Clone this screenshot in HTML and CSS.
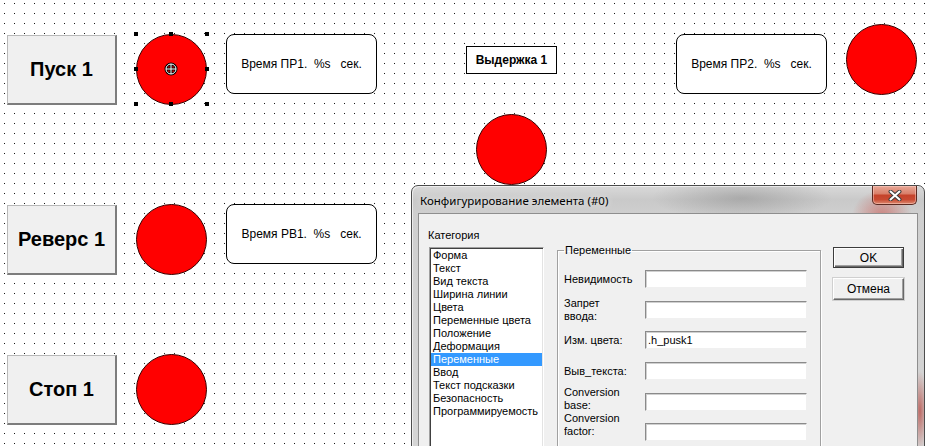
FILE: index.html
```html
<!DOCTYPE html>
<html lang="ru">
<head>
<meta charset="utf-8">
<title>Визуализация</title>
<link rel="stylesheet" href="styles.css">
</head>
<body>
<div class="canvas">
  <div class="obj hmi-btn b1">Пуск 1</div>
  <div class="obj hmi-btn b2">Реверс 1</div>
  <div class="obj hmi-btn b3">Стоп 1</div>

  <div class="obj lamp l1"></div>
  <div class="obj lamp l2"></div>
  <div class="obj lamp l3"></div>
  <div class="obj lamp l4"></div>
  <div class="obj lamp l5"></div>

  <div class="obj handle h-tl"></div><div class="obj handle h-tm"></div><div class="obj handle h-tr"></div>
  <div class="obj handle h-ml"></div><div class="obj handle h-mr"></div>
  <div class="obj handle h-bl"></div><div class="obj handle h-bm"></div><div class="obj handle h-br"></div>
  <svg class="obj cross" width="14" height="14" viewBox="0 0 14 14">
    <circle cx="7" cy="7" r="5" fill="none" stroke="#000" stroke-width="3"/>
    <path d="M7 1.5V12.5M1.5 7H12.5" stroke="#000" stroke-width="3"/>
    <circle cx="7" cy="7" r="5" fill="none" stroke="#fff" stroke-width="1"/>
    <path d="M7 2V12M2 7H12" stroke="#fff" stroke-width="1"/>
  </svg>

  <div class="obj tbox t1">Время ПР1.  %s   сек.</div>
  <div class="obj tbox t2">Время ПР2.  %s   сек.</div>
  <div class="obj tbox t3">Время РВ1.  %s   сек.</div>
  <div class="obj delay">Выдержка 1</div>

  <div class="obj dialog">
    <div class="titlebar">
      <span class="title">Конфигурирование элемента (#0)</span>
      <div class="close">
        <svg width="14" height="11" viewBox="0 0 14 11">
          <path d="M2.5 1.5L11.5 9.5M11.5 1.5L2.5 9.5" stroke="#3b3b3b" stroke-width="4" stroke-linecap="round"/>
          <path d="M2.5 1.5L11.5 9.5M11.5 1.5L2.5 9.5" stroke="#fff" stroke-width="2" stroke-linecap="round"/>
        </svg>
      </div>
    </div>
    <div class="client">
      <div class="cat-col">
        <div class="cat-label">Категория</div>
        <ul class="list">
          <li>Форма</li>
          <li>Текст</li>
          <li>Вид текста</li>
          <li>Ширина линии</li>
          <li>Цвета</li>
          <li>Переменные цвета</li>
          <li>Положение</li>
          <li>Деформация</li>
          <li class="sel">Переменные</li>
          <li>Ввод</li>
          <li>Текст подсказки</li>
          <li>Безопасность</li>
          <li>Программируемость</li>
        </ul>
      </div>
      <fieldset class="group">
        <legend>Переменные</legend>
        <div class="rows">
          <div class="lbl">Невидимость</div><div class="inp"></div>
          <div class="lbl">Запрет<br>ввода:</div><div class="inp"></div>
          <div class="lbl">Изм. цвета:</div><div class="inp">.h_pusk1</div>
          <div class="lbl">Выв_текста:</div><div class="inp"></div>
          <div class="lbl up">Conversion<br>base:</div><div class="inp"></div>
          <div class="lbl up2">Conversion<br>factor:</div><div class="inp"></div>
        </div>
      </fieldset>
      <div class="buttons">
        <div class="dbtn ok">OK</div>
        <div class="dbtn cancel">Отмена</div>
      </div>
    </div>
  </div>
</div>
</body>
</html>
```
FILE: styles.css
```css
* { box-sizing: border-box; }
html, body { margin: 0; padding: 0; }
body { width: 929px; height: 446px; overflow: hidden; background: #fff; }

.canvas {
  position: relative;
  width: 929px;
  height: 446px;
  overflow: hidden;
  font-family: "Liberation Sans", Arial, sans-serif;
  background:
    linear-gradient(90deg, #fff 9px, transparent 9px) 5px 4px / 10px 10px,
    linear-gradient(#fff 9px, #1a1a1a 9px) 5px 4px / 10px 10px;
}

.obj { position: absolute; }

/* HMI push buttons */
.hmi-btn {
  left: 7px;
  width: 110px;
  height: 70px;
  background: #f0f0f0;
  border: 1px solid #b9b9b9;
  border-right: 2px solid #7d7d7d;
  border-bottom: 2px solid #7d7d7d;
  display: flex;
  align-items: center;
  justify-content: center;
  font-weight: bold;
  font-size: 20px;
  color: #000;
}
.b1 { top: 35px; }
.b2 { top: 205px; }
.b3 { top: 355px; }

/* lamps */
.lamp {
  width: 71px;
  height: 71px;
  border-radius: 50%;
  background: #ff0000;
  border: 1px solid #3a0000;
}
.l1 { left: 136px; top: 34px; }
.l2 { left: 136px; top: 204px; }
.l3 { left: 136px; top: 354px; }
.l4 { left: 846px; top: 24px; }
.l5 { left: 476px; top: 114px; }

/* selection handles */
.handle { width: 4px; height: 4px; background: #000; }
.h-tl { left: 134px; top: 32px; }
.h-tm { left: 169px; top: 32px; }
.h-tr { left: 205px; top: 32px; }
.h-ml { left: 134px; top: 67px; }
.h-mr { left: 205px; top: 67px; }
.h-bl { left: 134px; top: 102px; }
.h-bm { left: 169px; top: 102px; }
.h-br { left: 205px; top: 102px; }
.cross { left: 164px; top: 62px; }

/* text boxes */
.tbox {
  width: 151px;
  height: 60px;
  border: 1px solid #000;
  border-radius: 8px;
  background: #fff;
  display: flex;
  align-items: center;
  justify-content: center;
  font-size: 12px;
  white-space: pre;
  color: #000;
}
.t1 { left: 226px; top: 34px; }
.t2 { left: 676px; top: 34px; }
.t3 { left: 226px; top: 204px; }

.delay {
  left: 466px;
  top: 46px;
  width: 91px;
  height: 28px;
  border: 1px solid #000;
  background: #fff;
  display: flex;
  align-items: center;
  justify-content: center;
  font-size: 12px;
  font-weight: bold;
}

/* dialog */
.dialog {
  left: 411px;
  top: 185px;
  width: 514px;
  height: 290px;
  z-index: 5;
  border: 1px solid #4d4d4d;
  border-radius: 7px 7px 0 0;
  padding: 0 6px;
  background:
    radial-gradient(ellipse 30px 26px at 470px 30px, rgba(200, 40, 30, 0.45), transparent),
    radial-gradient(ellipse 8px 40px at 508px 225px, rgba(170, 20, 10, 0.55), transparent),
    radial-gradient(ellipse 90px 22px at 330px 12px, rgba(110, 110, 110, 0.35), transparent),
    linear-gradient(180deg, #d9d9d9 0, #c9c9c9 14px, #cfcfcf 28px, #d6d6d6 100%);
  box-shadow: inset 1px 1px 0 rgba(255,255,255,0.6);
}
.titlebar {
  height: 27px;
  display: flex;
  justify-content: space-between;
  align-items: flex-start;
}
.title {
  font-family: "Noto Sans", "DejaVu Sans", sans-serif;
  font-size: 11.5px;
  line-height: 16px;
  padding: 7px 0 0 2px;
  color: #000;
  text-shadow: 0 0 6px rgba(255,255,255,0.9);
}
.close {
  width: 45px;
  height: 19px;
  margin-right: 1px;
  border: 1px solid #5b2a22;
  border-top: none;
  border-radius: 0 0 5px 5px;
  background: linear-gradient(180deg, #e8a897 0%, #d9806b 42%, #c5432b 52%, #c84a32 75%, #dc8a70 100%);
  display: flex;
  align-items: center;
  justify-content: center;
  box-shadow: inset 0 0 0 1px rgba(255,210,200,0.5);
}

.client {
  height: 262px;
  overflow: hidden;
  background: #f0f0f0;
  border: 1px solid #8e8e8e;
  display: flex;
  align-items: flex-start;
  font-family: "Liberation Sans", Arial, sans-serif;
  font-size: 11px;
  color: #000;
}
.cat-col {
  margin-left: 9px;
  width: 116px;
  flex: none;
  padding-top: 15px;
}
.cat-label { line-height: 13px; height: 13px; }
.list {
  list-style: none;
  margin: 5px 0 0 1px;
  width: 115px;
  height: 220px;
  background: #fff;
  border: 1px solid;
  border-color: #a0a0a0 #fff #fff #a0a0a0;
  box-shadow: inset 1px 1px 0 #404040, inset -1px -1px 0 #e3e3e3;
  padding: 1px 1px 0 1px;
}
.list li {
  line-height: 13px;
  height: 13px;
  padding-left: 2px;
  white-space: nowrap;
}
.list li.sel { background: #3399ff; color: #fff; }

.group {
  flex: none;
  margin: 30px 0 0 13px;
  padding: 0 0 0 6px;
  width: 264px;
  height: 240px;
  border: 1px solid #a0a0a0;
  box-shadow: 1px 1px 0 #fff, inset 1px 1px 0 #fff;
  min-width: 0;
}
.group legend {
  margin-left: 0;
  padding: 0 1px;
  line-height: 13px;
  font-size: 11px;
}
.rows {
  display: grid;
  grid-template-columns: 81px 162px;
  grid-auto-rows: 30.6px;
  align-items: center;
  padding-top: 7px;
}
.lbl {
  line-height: 13px;
  overflow: hidden;
  white-space: nowrap;
}
.lbl.up { margin-top: -6px; }
.lbl.up2 { margin-top: -14px; }
.inp {
  height: 18px;
  background: #fff;
  border: 1px solid;
  border-color: #8a8a8a #f0f0f0 #f0f0f0 #8a8a8a;
  box-shadow: inset 1px 1px 0 #d0d0d0;
  padding: 0 2px;
  line-height: 16px;
  white-space: nowrap;
}

.buttons {
  flex: none;
  margin: 33px 0 0 12px;
  width: 71px;
  display: flex;
  flex-direction: column;
  gap: 10px;
}
.dbtn {
  height: 22px;
  background: #f0f0f0;
  border: 1px solid;
  border-color: #fff #696969 #696969 #fff;
  box-shadow: inset -1px -1px 0 #a0a0a0, 0 0 0 1px #d0d0d0;
  display: flex;
  align-items: center;
  justify-content: center;
  font-size: 12px;
}
.ok {
  height: 21px;
  border: 1px solid #3c3c3c;
  box-shadow: inset 1px 1px 0 #fff, inset -1px -1px 0 #696969, inset -2px -2px 0 #a0a0a0;
}
```
